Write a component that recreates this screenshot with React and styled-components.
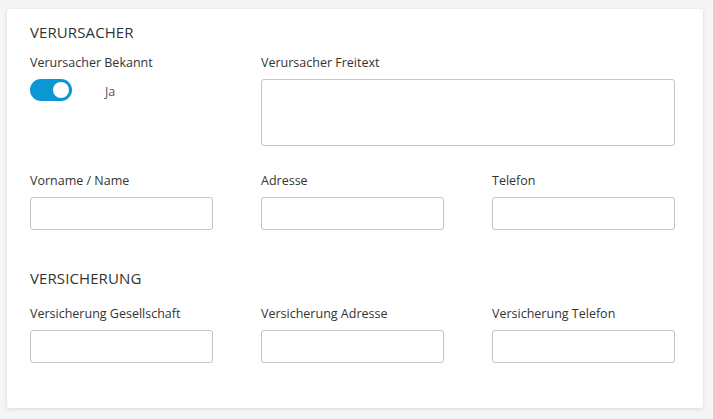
import React from "react";
import styled, { createGlobalStyle } from "styled-components";

const Global = createGlobalStyle`
  html, body { margin: 0; padding: 0; background: #f4f5f7; }
  body { font-family: "Open Sans", "Noto Sans", sans-serif; color: #333; }
  * { box-sizing: border-box; }
`;

const Page = styled.div`
  padding: 9px 10px 11px 7px;
`;

const Card = styled.div`
  background: #fff;
  border-radius: 3px;
  box-shadow: 0 1px 4px rgba(0, 0, 0, 0.12);
  padding: 13px 29px 45px 23px;
  height: 399px;
`;

const SectionTitle = styled.h2`
  margin: ${(p) => p.$top || 0}px 0 ${(p) => p.$bottom || 0}px;
  font-size: 15px;
  line-height: 20px;
  font-weight: 400;
  color: #333;
  letter-spacing: 0.1px;
`;

const Grid = styled.div`
  display: grid;
  grid-template-columns: 183px 183px 183px;
  column-gap: 48px;
  row-gap: ${(p) => p.$rowGap || 0}px;
`;

const Field = styled.div`
  display: flex;
  flex-direction: column;
  grid-column: ${(p) => p.$span || "auto"};
`;

const Label = styled.label`
  font-size: 12.5px;
  line-height: 18px;
  color: #333;
  margin-bottom: 7px;
`;

const Input = styled.input`
  height: 33px;
  width: 100%;
  border: 1px solid #c4c4c4;
  border-radius: 3px;
  background: #fff;
  font: inherit;
  padding: 0 8px;
  outline: none;
`;

const TextArea = styled.textarea`
  height: 67px;
  width: 100%;
  border: 1px solid #c4c4c4;
  border-radius: 3px;
  background: #fff;
  font: inherit;
  resize: none;
  padding: 6px 8px;
  outline: none;
`;

const SwitchRow = styled.div`
  display: flex;
  align-items: center;
  gap: 33px;
`;

const Switch = styled.span`
  position: relative;
  display: inline-block;
  width: 42px;
  height: 22px;
  border-radius: 11px;
  background: ${(p) => (p.$on ? "#0b97d4" : "#ccc")};
  &::after {
    content: "";
    position: absolute;
    top: 3px;
    left: ${(p) => (p.$on ? "23px" : "3px")};
    width: 16px;
    height: 16px;
    border-radius: 50%;
    background: #fff;
  }
`;

const SwitchText = styled.span`
  font-size: 12.5px;
  line-height: 18px;
  color: #555;
  font-weight: 400;
  padding-top: 3px;
`;

export default function App() {
  return (
    <>
      <Global />
      <Page>
        <Card>
          <SectionTitle $bottom={12}>VERURSACHER</SectionTitle>
          <Grid $rowGap={26}>
            <Field>
              <Label>Verursacher Bekannt</Label>
              <SwitchRow>
                <Switch $on />
                <SwitchText>Ja</SwitchText>
              </SwitchRow>
            </Field>
            <Field $span="2 / span 2">
              <Label>Verursacher Freitext</Label>
              <TextArea />
            </Field>
            <Field>
              <Label>Vorname / Name</Label>
              <Input />
            </Field>
            <Field>
              <Label>Adresse</Label>
              <Input />
            </Field>
            <Field>
              <Label>Telefon</Label>
              <Input />
            </Field>
          </Grid>
          <SectionTitle $top={38} $bottom={17}>VERSICHERUNG</SectionTitle>
          <Grid>
            <Field>
              <Label>Versicherung Gesellschaft</Label>
              <Input />
            </Field>
            <Field>
              <Label>Versicherung Adresse</Label>
              <Input />
            </Field>
            <Field>
              <Label>Versicherung Telefon</Label>
              <Input />
            </Field>
          </Grid>
        </Card>
      </Page>
    </>
  );
}
